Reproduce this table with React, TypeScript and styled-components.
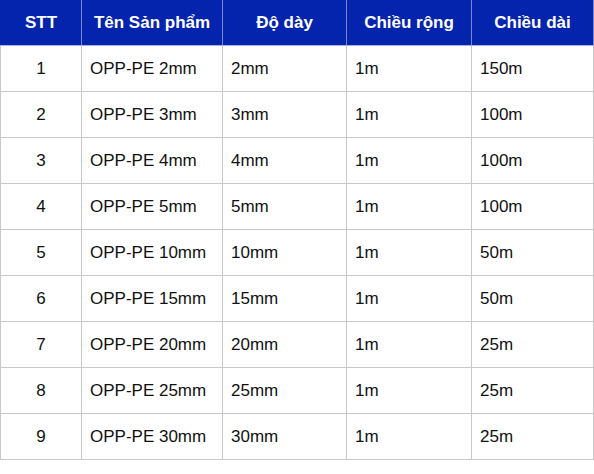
import React from "react";
import styled, { createGlobalStyle } from "styled-components";

type Row = {
  stt: number;
  name: string;
  thickness: string;
  width: string;
  length: string;
};

const rows: Row[] = [
  { stt: 1, name: "OPP-PE 2mm", thickness: "2mm", width: "1m", length: "150m" },
  { stt: 2, name: "OPP-PE 3mm", thickness: "3mm", width: "1m", length: "100m" },
  { stt: 3, name: "OPP-PE 4mm", thickness: "4mm", width: "1m", length: "100m" },
  { stt: 4, name: "OPP-PE 5mm", thickness: "5mm", width: "1m", length: "100m" },
  { stt: 5, name: "OPP-PE 10mm", thickness: "10mm", width: "1m", length: "50m" },
  { stt: 6, name: "OPP-PE 15mm", thickness: "15mm", width: "1m", length: "50m" },
  { stt: 7, name: "OPP-PE 20mm", thickness: "20mm", width: "1m", length: "25m" },
  { stt: 8, name: "OPP-PE 25mm", thickness: "25mm", width: "1m", length: "25m" },
  { stt: 9, name: "OPP-PE 30mm", thickness: "30mm", width: "1m", length: "25m" },
];

const GlobalStyle = createGlobalStyle`
  body {
    margin: 0;
    background: #ffffff;
    font-family: "Liberation Sans", Arial, sans-serif;
  }
`;

const App: React.FC = () => {
  return (
    <>
      <GlobalStyle />
      <Table>
        <colgroup>
          <col style={{ width: 81 }} />
          <col style={{ width: 141 }} />
          <col style={{ width: 124 }} />
          <col style={{ width: 125 }} />
          <col />
        </colgroup>
        <thead>
          <tr>
            <HeadCell>STT</HeadCell>
            <HeadCell>Tên Sản phẩm</HeadCell>
            <HeadCell>Độ dày</HeadCell>
            <HeadCell>Chiều rộng</HeadCell>
            <HeadCell>Chiều dài</HeadCell>
          </tr>
        </thead>
        <tbody>
          {rows.map((row) => (
            <tr key={row.stt}>
              <Cell $center>{row.stt}</Cell>
              <Cell>{row.name}</Cell>
              <Cell>{row.thickness}</Cell>
              <Cell>{row.width}</Cell>
              <Cell>{row.length}</Cell>
            </tr>
          ))}
        </tbody>
      </Table>
    </>
  );
};

const Table = styled.table`
  width: 594px;
  border-collapse: collapse;
  table-layout: fixed;
  font-size: 17px;
  color: #111111;
`;

const HeadCell = styled.th`
  height: 45px;
  padding: 0 8px;
  background-color: #0424ad;
  color: #ffffff;
  font-weight: 700;
  text-align: center;
  border: 1px solid #7c89c9;
  border-top: none;
  border-bottom-color: #a9b0d4;

  &:first-child {
    border-left-color: #0424ad;
  }
`;

const Cell = styled.td<{ $center?: boolean }>`
  height: 45px;
  padding: 0 8px;
  text-align: ${(p) => (p.$center ? "center" : "left")};
  border: 1px solid #c8c8c8;
`;

export default App;
